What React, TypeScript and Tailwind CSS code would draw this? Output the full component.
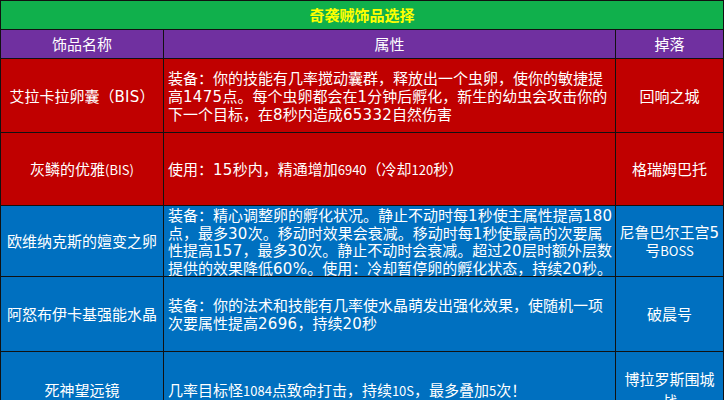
import React from "react";

const W = ({ children }: { children: React.ReactNode }) => (
  <span className="font-['DejaVu_Sans','Noto_Sans_CJK_SC',sans-serif] tracking-[0.3px]">{children}</span>
);
const N = ({ children }: { children: React.ReactNode }) => (
  <span className="font-['Noto_Sans_CJK_SC',sans-serif] text-[13px]">{children}</span>
);

const rows: {
  bg: string;
  h: string;
  lh: string;
  name: React.ReactNode;
  lines: React.ReactNode[];
  drop: React.ReactNode[];
  dropH: string;
}[] = [
  {
    bg: "bg-[#c00000]",
    h: "h-[74px]",
    lh: "h-[18px] leading-[18px]",
    name: (
      <>
        艾拉卡拉卵囊（<W>BIS</W>）
      </>
    ),
    lines: [
      <>装备：你的技能有几率搅动囊群，释放出一个虫卵，使你的敏捷提</>,
      <>
        高<W>1475</W>点。每个虫卵都会在<W>1</W>分钟后孵化，新生的幼虫会攻击你的
      </>,
      <>
        下一个目标，在<W>8</W>秒内造成<W>65332</W>自然伤害
      </>,
    ],
    drop: [<>回响之城</>],
    dropH: "h-[18px] leading-[18px]",
  },
  {
    bg: "bg-[#c00000]",
    h: "h-[73px]",
    lh: "h-[18px] leading-[18px]",
    name: (
      <>
        灰鳞的优雅<N>(BIS)</N>
      </>
    ),
    lines: [
      <>
        使用：<W>15</W>秒内，精通增加<N>6940</N>（冷却<N>120</N>秒）
      </>,
    ],
    drop: [<>格瑞姆巴托</>],
    dropH: "h-[18px] leading-[18px]",
  },
  {
    bg: "bg-[#0070c0]",
    h: "h-[71px]",
    lh: "h-[17.5px] leading-[17.5px]",
    name: <>欧维纳克斯的嬗变之卵</>,
    lines: [
      <>
        装备：精心调整卵的孵化状况。静止不动时每<W>1</W>秒使主属性提高<W>180</W>
      </>,
      <>
        点，最多<W>30</W>次。移动时效果会衰减。移动时每<W>1</W>秒使最高的次要属
      </>,
      <>
        性提高<W>157</W>，最多<W>30</W>次。静止不动时会衰减。超过<W>20</W>层时额外层数
      </>,
      <>
        提供的效果降低<W>60%</W>。使用：冷却暂停卵的孵化状态，持续<W>20</W>秒。
      </>,
    ],
    drop: [
      <>
        尼鲁巴尔王宫<W>5</W>
      </>,
      <>
        号<N>BOSS</N>
      </>,
    ],
    dropH: "h-[18px] leading-[18px]",
  },
  {
    bg: "bg-[#0070c0]",
    h: "h-[75px]",
    lh: "h-[18px] leading-[18px]",
    name: <>阿怒布伊卡基强能水晶</>,
    lines: [
      <>装备：你的法术和技能有几率使水晶萌发出强化效果，使随机一项</>,
      <>
        次要属性提高<W>2696</W>，持续<W>20</W>秒
      </>,
    ],
    drop: [<>破晨号</>],
    dropH: "h-[18px] leading-[18px]",
  },
  {
    bg: "bg-[#0070c0]",
    h: "h-[76px]",
    lh: "h-[18px] leading-[18px]",
    name: <>死神望远镜</>,
    lines: [
      <>
        几率目标怪<N>1084</N>点致命打击，持续<N>10S</N>，最多叠加<N>5</N>次！
      </>,
    ],
    drop: [<>博拉罗斯围城</>, <>战</>],
    dropH: "h-[22px] leading-[22px]",
  },
];

export default function App() {
  return (
    <div className="w-[724px] h-[400px] overflow-hidden bg-white font-['Noto_Sans_CJK_SC',sans-serif] text-[15px] text-white">
      <table className="w-[723px] table-fixed border-collapse">
        <colgroup>
          <col className="w-[163px]" />
          <col className="w-[452px]" />
          <col className="w-[108px]" />
        </colgroup>
        <tbody>
          <tr className="h-[29px] bg-[#10b04c]">
            <td
              colSpan={3}
              className="border border-[#111] text-center font-bold text-[#ffff00] text-[15px] leading-[18px]"
            >
              奇袭贼饰品选择
            </td>
          </tr>
          <tr className="h-[29px] bg-[#7030a0]">
            <td className="border border-[#111] text-center leading-[18px]">饰品名称</td>
            <td className="border border-[#111] text-center leading-[18px]">属性</td>
            <td className="border border-[#111] text-center leading-[18px]">掉落</td>
          </tr>
          {rows.map((r, i) => (
            <tr key={i} className={`${r.h} ${r.bg}`}>
              <td className="border border-[#111] text-center whitespace-nowrap">
                <div className="h-[18px] leading-[18px]">{r.name}</div>
              </td>
              <td className="border border-[#111] pl-[4px] whitespace-nowrap">
                {r.lines.map((l, j) => (
                  <div key={j} className={r.lh}>
                    {l}
                  </div>
                ))}
              </td>
              <td className="border border-[#111] text-center whitespace-nowrap">
                {r.drop.map((d, j) => (
                  <div key={j} className={r.dropH}>
                    {d}
                  </div>
                ))}
              </td>
            </tr>
          ))}
        </tbody>
      </table>
    </div>
  );
}
